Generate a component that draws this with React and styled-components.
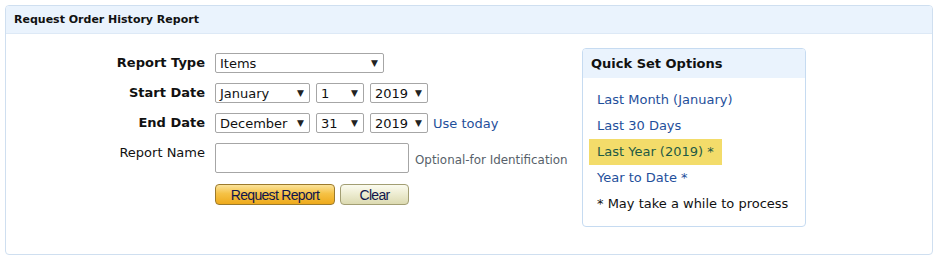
import React from "react";
import styled, { createGlobalStyle } from "styled-components";

const GlobalStyle = createGlobalStyle`
  body {
    margin: 0;
    background: #ffffff;
    font-family: "DejaVu Sans", Verdana, sans-serif;
    color: #111111;
  }
`;

const Panel = styled.div`
  margin: 5px;
  width: 926px;
  height: 248px;
  border: 1px solid #cfdff0;
  border-radius: 4px;
  box-sizing: content-box;
  overflow: hidden;
`;

const PanelHeader = styled.div`
  height: 27px;
  background: #eaf3fd;
  border-bottom: 1px solid #dde9f6;
  display: flex;
  align-items: center;
  padding-left: 8px;
  font-size: 11px;
  font-weight: bold;
  color: #111;
`;

const PanelBody = styled.div`
  display: flex;
  align-items: flex-start;
  padding-top: 14px;
`;

const Form = styled.div`
  display: grid;
  grid-template-columns: 199px auto;
  column-gap: 10px;
  row-gap: 10px;
  padding-top: 5px;
  width: 570px;
`;

const Label = styled.div`
  text-align: right;
  font-size: 13px;
  font-weight: ${(p) => (p.$bold ? "bold" : "normal")};
  line-height: 20px;
  align-self: ${(p) => (p.$top ? "start" : "center")};
`;

const Controls = styled.div`
  display: flex;
  align-items: center;
  gap: 6px;
`;

const Select = styled.div`
  width: ${(p) => p.$w}px;
  height: 20px;
  box-sizing: border-box;
  border: 1px solid #a6a6a6;
  border-radius: 2px;
  display: flex;
  align-items: center;
  justify-content: space-between;
  padding: 0 5px 0 4px;
  font-size: 13px;
  background: #fff;
`;

const Arrow = styled.span`
  font-size: 9px;
  color: #222;
`;

const Link = styled.span`
  color: #1f4f9b;
  font-size: 13px;
  margin-left: -1px;
`;

const TextInput = styled.div`
  width: 194px;
  height: 30px;
  box-sizing: border-box;
  border: 1px solid #a6a6a6;
  border-radius: 2px;
`;

const Hint = styled.span`
  color: #575f6a;
  font-size: 11.9px;
  align-self: center;
  margin-top: 3px;
`;

const Buttons = styled.div`
  display: flex;
  gap: 5px;
  margin-top: 1px;
`;

const Button = styled.div`
  height: 21px;
  box-sizing: border-box;
  width: ${(p) => p.$w}px;
  border: 1px solid ${(p) => (p.$primary ? "#9c7a2c" : "#a29e73")};
  border-radius: 4px;
  background: ${(p) =>
    p.$primary
      ? "linear-gradient(#fbe39b, #f5c246 45%, #eeaa1c)"
      : "linear-gradient(#fbfbef, #ecebcf 50%, #dcdab1)"};
  display: flex;
  align-items: center;
  justify-content: center;
  font-family: "Liberation Sans", Arial, sans-serif;
  font-size: 14px;
  letter-spacing: -0.7px;
  color: #10164d;
`;

const QuickSet = styled.div`
  margin-left: 6px;
  width: 222px;
  border: 1px solid #c6dbf1;
  border-radius: 4px;
  overflow: hidden;
`;

const QuickHeader = styled.div`
  height: 29px;
  background: #eaf3fd;
  display: flex;
  align-items: center;
  padding-left: 8px;
  font-size: 13px;
  font-weight: bold;
`;

const QuickList = styled.div`
  padding: 9px 0 9px 6px;
`;

const QuickItem = styled.div`
  display: inline-block;
  height: 26px;
  line-height: 26px;
  padding: 0 8px;
  font-size: 13px;
  color: ${(p) => (p.$note ? "#111" : p.$active ? "#1f5a45" : "#1f4f9b")};
  background: ${(p) => (p.$active ? "#f3dc6a" : "transparent")};
`;

const Row = styled.div``;

export default function App() {
  return (
    <>
      <GlobalStyle />
      <Panel>
        <PanelHeader>Request Order History Report</PanelHeader>
        <PanelBody>
          <Form>
            <Label $bold>Report Type</Label>
            <Controls>
              <Select $w={169}>
                Items<Arrow>▼</Arrow>
              </Select>
            </Controls>

            <Label $bold>Start Date</Label>
            <Controls>
              <Select $w={95}>
                January<Arrow>▼</Arrow>
              </Select>
              <Select $w={48}>
                1<Arrow>▼</Arrow>
              </Select>
              <Select $w={58}>
                2019<Arrow>▼</Arrow>
              </Select>
            </Controls>

            <Label $bold>End Date</Label>
            <Controls>
              <Select $w={95}>
                December<Arrow>▼</Arrow>
              </Select>
              <Select $w={48}>
                31<Arrow>▼</Arrow>
              </Select>
              <Select $w={58}>
                2019<Arrow>▼</Arrow>
              </Select>
              <Link>Use today</Link>
            </Controls>

            <Label $top>Report Name</Label>
            <Controls>
              <TextInput />
              <Hint>Optional-for Identification</Hint>
            </Controls>

            <div />
            <Buttons>
              <Button $primary $w={120}>Request Report</Button>
              <Button $w={69}>Clear</Button>
            </Buttons>
          </Form>

          <QuickSet>
            <QuickHeader>Quick Set Options</QuickHeader>
            <QuickList>
              <Row><QuickItem>Last Month (January)</QuickItem></Row>
              <Row><QuickItem>Last 30 Days</QuickItem></Row>
              <Row><QuickItem $active>Last Year (2019) *</QuickItem></Row>
              <Row><QuickItem>Year to Date *</QuickItem></Row>
              <Row><QuickItem $note>* May take a while to process</QuickItem></Row>
            </QuickList>
          </QuickSet>
        </PanelBody>
      </Panel>
    </>
  );
}
